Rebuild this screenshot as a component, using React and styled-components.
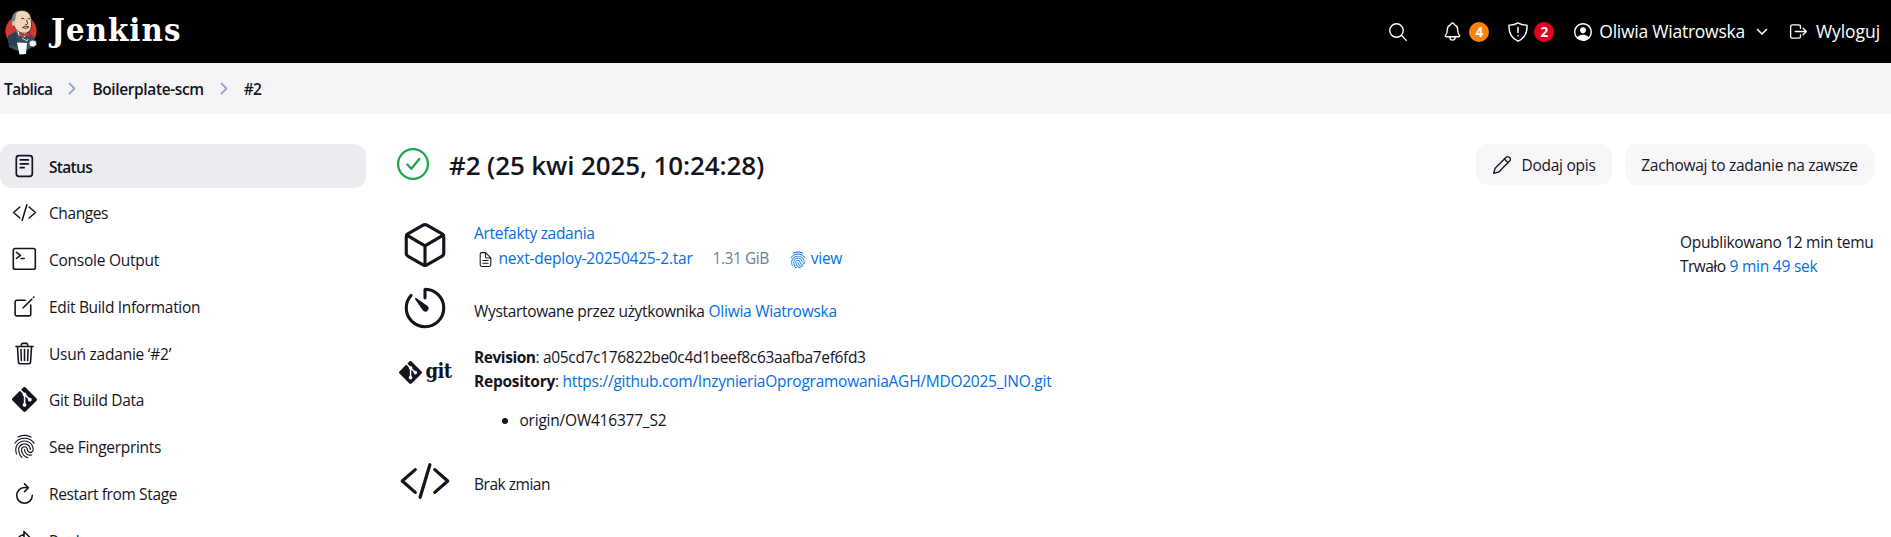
import React from "react";
import styled, { createGlobalStyle } from "styled-components";
import {
  IoSearchOutline,
  IoNotificationsOutline,
  IoPersonCircleOutline,
  IoLogOutOutline,
  IoCodeSlashOutline,
  IoCreateOutline,
  IoTrashOutline,
  IoFingerPrintOutline,
  IoRefreshOutline,
  IoCubeOutline,
  IoTimerOutline,
  IoDocumentTextOutline,
} from "react-icons/io5";
import { SiGit } from "react-icons/si";

const GlobalStyle = createGlobalStyle`
  * { box-sizing: border-box; }
  html, body { margin: 0; height: 100%; overflow: hidden; background: #fff; }
  body {
    font-family: "Open Sans", "Noto Sans", sans-serif;
    font-size: 15.5px;
    line-height: 24px;
    color: #14141f;
  }
  svg { display: block; flex-shrink: 0; }
`;

const Page = styled.div`
  height: 537px;
  overflow: hidden;
  display: flex;
  flex-direction: column;
`;

const Header = styled.header`
  flex: none;
  height: 63px;
  padding: 0 11px 0 5px;
  display: flex;
  align-items: center;
  justify-content: space-between;
  background: #000;
  color: #fff;
`;

const Brand = styled.a`
  display: flex;
  align-items: center;
  gap: 14px;
`;

const BrandName = styled.span`
  font-family: "DejaVu Serif Condensed", "DejaVu Serif", serif;
  font-stretch: condensed;
  font-weight: 700;
  font-size: 32.5px;
  line-height: 40px;
  letter-spacing: 1.1px;
  padding-bottom: 3px;
`;

const HeaderTools = styled.nav`
  display: flex;
  align-items: center;
`;

const Label = styled.span`
  letter-spacing: ${(p) => p.$track || 0}px;
  white-space: nowrap;
`;

const Tool = styled.a`
  display: flex;
  align-items: center;
  gap: ${(p) => p.$gap || 6}px;
  margin-left: ${(p) => p.$before || 0}px;
  font-size: 17.5px;
  white-space: nowrap;
  ${Label} { padding-bottom: 1px; }
`;

const Count = styled.span`
  width: 20px;
  height: 20px;
  border-radius: 50%;
  background: ${(p) => p.$color};
  font-size: 13.5px;
  font-weight: 700;
  line-height: 20px;
  text-align: center;
`;

const Breadcrumbs = styled.nav`
  flex: none;
  height: 51px;
  padding-left: 4px;
  display: flex;
  align-items: center;
  background: #f5f5f8;
  font-weight: 600;
`;

const Separator = styled.span`
  width: 40px;
  display: flex;
  justify-content: center;
  color: #94a5c5;
`;

const Body = styled.div`
  flex: 1;
  min-height: 0;
  display: flex;
  padding: 30px 17px 0 0;
`;

const Sidebar = styled.aside`
  flex: none;
  width: 366px;
  margin-right: 30px;
  display: flex;
  flex-direction: column;
  gap: 2.75px;
`;

const Task = styled.a`
  flex: none;
  height: 44px;
  padding-left: 12px;
  display: flex;
  align-items: center;
  gap: 12px;
  border-radius: 12px;
  background: ${(p) => (p.$active ? "#ecedf3" : "transparent")};
  font-weight: ${(p) => (p.$active ? 600 : 400)};
  ${Label} { padding-top: 1px; }
`;

const TaskIcon = styled.span`
  width: 25px;
  display: flex;
  justify-content: center;
`;

const Main = styled.main`
  flex: 1;
  min-width: 0;
`;

const TitleBar = styled.div`
  height: 41px;
  margin-bottom: 30px;
  display: flex;
  align-items: center;
`;

const Title = styled.h1`
  margin: 0 auto 0 20px;
  font-size: 26px;
  font-weight: 600;
  line-height: 40px;
  letter-spacing: -0.12px;
`;

const Button = styled.button`
  height: 41px;
  width: ${(p) => p.$width}px;
  margin-left: 13px;
  padding: 0;
  display: flex;
  align-items: center;
  justify-content: center;
  gap: 9px;
  border: 0;
  border-radius: 12px;
  background: #f7f7fa;
  color: inherit;
  font: inherit;
  ${Label} { padding-top: 1px; }
`;

const Content = styled.div`
  display: flex;
  justify-content: space-between;
`;

const Row = styled.section`
  display: flex;
  align-items: ${(p) => p.$align || "center"};
  height: ${(p) => p.$height}px;
`;

const RowIcon = styled.div`
  width: 58px;
  height: 62px;
  margin-right: 20px;
  display: flex;
  align-items: center;
  justify-content: center;
`;

const RowText = styled.div`
  padding-top: ${(p) => p.$top || 0}px;
`;

const Link = styled.a`
  color: #006fe6;
  letter-spacing: ${(p) => p.$track || 0}px;
  white-space: nowrap;
`;

const Artifact = styled.div`
  display: flex;
  align-items: center;
  height: 26px;
  padding-left: 3px;
  svg { margin-top: 3px; }
`;

const FileLink = styled(Link)`
  margin-left: 4.5px;
`;

const FileSize = styled.span`
  margin: 0 20px 0 20px;
  color: #6b7d9c;
  letter-spacing: -0.45px;
`;

const ViewLink = styled(Link)`
  display: flex;
  align-items: center;
  gap: 4px;
`;

const GitLogo = styled.div`
  display: flex;
  align-items: center;
  gap: 4px;
`;

const GitWord = styled.span`
  font-family: "DejaVu Serif Condensed", "DejaVu Serif", serif;
  font-stretch: condensed;
  font-weight: 700;
  font-size: 20px;
  letter-spacing: -0.6px;
  padding-bottom: 3px;
`;

const Branches = styled.ul`
  margin: 15px 0 0;
  padding-left: 45.5px;
`;

const Timing = styled.div`
  width: 194px;
  padding-top: 15px;
`;

const Butler = () => (
  <svg width="32" height="46" viewBox="0 0 32 46">
    <circle cx="16" cy="22" r="15.6" fill="#d33833" />
    <path d="M3 27l8-5 12 1 6 5 1 9-6 3-5 3-9-2-6-3z" fill="#335061" />
    <path d="M3 27l8-4 2 15-7-1-3-4z" fill="#264252" />
    <path d="M11 20l3 7 6 1 3-6z" fill="#fff" />
    <path d="M7.500 11C7.500 5 11.500 1.500 17 1.500S26 5 26.300 11c0 3 .8 5-.5 8.500-1 3-3.500 4.800-6.500 4.800-5 0-9-3.300-10.500-8.300z" fill="#f0d6b7" stroke="#332a24" strokeWidth=".8" />
    <path d="M7.500 15C5.500 9 8 3.500 13 2c-2 2.500-2.500 5-2.500 7.500L9 15z" fill="#7b7d80" />
    <ellipse cx="8.600" cy="14.500" rx="1.700" ry="2.400" fill="#e5bd97" />
    <path d="M16 10q2-1.600 3.500 0M22.500 10q1.500-1.300 2.500 0M21.500 11q2 4 .5 4.500h-1.500M17.500 18.500q2.500-2.500 6.500-.6-2.500 2.800-6.500.6" fill="none" stroke="#493629" strokeWidth="1" />
    <path d="M14.500 23.500l5 2 5-2.500.5 5.500-5-2-5 2.500z" fill="#d33833" stroke="#68211e" strokeWidth=".5" />
    <path d="M17 29l5 3 1-2" fill="none" stroke="#dce3e6" strokeWidth="1" />
    <path d="M12 33.500l10 .5L21 45l-6.500.5z" fill="#fff" />
    <path d="M24 33l3-2 4 1 .5 4-3 2-4-1z" fill="#f4eee6" stroke="#444" strokeWidth=".7" />
  </svg>
);

const ShieldIcon = () => (
  <svg width="20" height="20" viewBox="0 0 20 20" fill="none" stroke="currentColor" strokeWidth="1.400" strokeLinecap="round" strokeLinejoin="round">
    <path d="M10 .9C7.600 2.500 4.500 3.200 1 3.100c-.5 7.500 1.500 12.500 9 16.100 7.500-3.600 9.500-8.600 9-16.100-3.500.1-6.600-.6-9-2.200z" />
    <path d="M10 5.500v5M10 13.400v.3" strokeWidth="1.500" />
  </svg>
);

const ChevronDown = () => (
  <svg width="12" height="8" viewBox="0 0 12 8" fill="none" stroke="currentColor" strokeWidth="1.600" strokeLinecap="round" strokeLinejoin="round">
    <path d="M1.500 1.500L6 6l4.500-4.500" />
  </svg>
);

const ChevronRight = () => (
  <svg width="8" height="13" viewBox="0 0 8 13" fill="none" stroke="currentColor" strokeWidth="1.800" strokeLinecap="round" strokeLinejoin="round">
    <path d="M1.500 1.500l5 5-5 5" />
  </svg>
);

const PencilIcon = () => (
  <svg width="20" height="20" viewBox="0 0 20 20" fill="none" stroke="currentColor" strokeWidth="1.350" strokeLinecap="round" strokeLinejoin="round">
    <path d="M1.700 18.300L3.100 13.200 13.900 2.400Q15.700.8 17.600 2.400 19.200 4.300 17.600 6.100L6.800 16.900z" />
    <path d="M12.300 4L16 7.700" />
  </svg>
);

const StatusIcon = () => (
  <svg width="25" height="25" viewBox="0 0 25 25" fill="none" stroke="currentColor" strokeWidth="1.700" strokeLinecap="round">
    <rect x="4.300" y="1.600" width="16" height="20.800" rx="2.600" />
    <path d="M8.300 5.900h8M8.300 9.800h8M8.300 13.700h3.800" />
  </svg>
);

const ConsoleIcon = () => (
  <svg width="25" height="25" viewBox="0 0 25 25" fill="none" stroke="currentColor" strokeWidth="1.600" strokeLinecap="round" strokeLinejoin="round">
    <rect x="1.300" y="1.500" width="22" height="20.800" rx="1.800" />
    <path d="M4.500 5.300l4 3-4 3M9 11.500h3.200" />
  </svg>
);

const ReplayIcon = () => (
  <svg width="25" height="25" viewBox="0 0 25 25" fill="none" stroke="currentColor" strokeWidth="1.600" strokeLinecap="round" strokeLinejoin="round">
    <path d="M12 3.500l5.500 5.500-5.500 5.500V3.500zM12 6.500C6 7.500 3.500 13 4.500 20" />
  </svg>
);

const SuccessIcon = () => (
  <svg width="33" height="33" viewBox="0 0 33 33" fill="none" stroke="#1ea64b" strokeWidth="2.300" strokeLinecap="round" strokeLinejoin="round">
    <circle cx="17" cy="16" r="14.900" />
    <path d="M11.300 16.500l4 4.300 8-9.800" />
  </svg>
);

const tasks = [
  { label: "Status", icon: <StatusIcon />, track: -0.69, active: true },
  { label: "Changes", icon: <IoCodeSlashOutline size={25} />, track: -0.41 },
  { label: "Console Output", icon: <ConsoleIcon />, track: -0.25 },
  { label: "Edit Build Information", icon: <IoCreateOutline size={25} />, track: -0.33 },
  { label: "Usuń zadanie ‘#2’", icon: <IoTrashOutline size={25} />, track: -0.23 },
  { label: "Git Build Data", icon: <SiGit size={25} />, track: -0.33 },
  { label: "See Fingerprints", icon: <IoFingerPrintOutline size={25} />, track: -0.31 },
  { label: "Restart from Stage", icon: <IoRefreshOutline size={25} />, track: -0.37 },
  { label: "Replay", icon: <ReplayIcon />, track: -0.35 },
];

export default function App() {
  return (
    <Page>
      <GlobalStyle />
      <Header>
        <Brand>
          <Butler />
          <BrandName>Jenkins</BrandName>
        </Brand>
        <HeaderTools>
          <Tool><IoSearchOutline size={22} /></Tool>
          <Tool $before={33}>
            <IoNotificationsOutline size={21} />
            <Count $color="#ff820d">4</Count>
          </Tool>
          <Tool $before={19}>
            <ShieldIcon />
            <Count $color="#e6001f">2</Count>
          </Tool>
          <Tool $before={18} $gap={5}>
            <IoPersonCircleOutline size={22} />
            <Label $track={-0.24}>Oliwia Wiatrowska</Label>
          </Tool>
          <Tool $before={11}><ChevronDown /></Tool>
          <Tool $before={20} $gap={7}>
            <IoLogOutOutline size={21} />
            <Label $track={-0.07}>Wyloguj</Label>
          </Tool>
        </HeaderTools>
      </Header>

      <Breadcrumbs>
        <Label $track={-0.62}>Tablica</Label>
        <Separator><ChevronRight /></Separator>
        <Label $track={-0.38}>Boilerplate-scm</Label>
        <Separator><ChevronRight /></Separator>
        <Label $track={-0.7}>#2</Label>
      </Breadcrumbs>

      <Body>
        <Sidebar>
          {tasks.map((t) => (
            <Task key={t.label} $active={t.active}>
              <TaskIcon>{t.icon}</TaskIcon>
              <Label $track={t.track}>{t.label}</Label>
            </Task>
          ))}
        </Sidebar>

        <Main>
          <TitleBar>
            <SuccessIcon />
            <Title>#2 (25 kwi 2025, 10:24:28)</Title>
            <Button $width={136}>
              <PencilIcon />
              <Label $track={-0.27}>Dodaj opis</Label>
            </Button>
            <Button $width={249}>
              <Label $track={-0.28}>Zachowaj to zadanie na zawsze</Label>
            </Button>
          </TitleBar>

          <Content>
            <div>
              <Row $height={60}>
                <RowIcon><IoCubeOutline size={50} /></RowIcon>
                <RowText $top={2}>
                  <Link $track={-0.3}>Artefakty zadania</Link>
                  <Artifact>
                    <IoDocumentTextOutline size={17} />
                    <FileLink $track={-0.22}>next-deploy-20250425-2.tar</FileLink>
                    <FileSize>1.31 GiB</FileSize>
                    <ViewLink $track={-0.3}>
                      <IoFingerPrintOutline size={18} />
                      view
                    </ViewLink>
                  </Artifact>
                </RowText>
              </Row>
              <Row $height={66}>
                <RowIcon><IoTimerOutline size={50} /></RowIcon>
                <RowText $top={6}>
                  <Label $track={-0.33}>Wystartowane przez użytkownika</Label>{" "}
                  <Link $track={-0.26}>Oliwia Wiatrowska</Link>
                </RowText>
              </Row>
              <Row $height={107} $align="flex-start">
                <RowIcon>
                  <GitLogo>
                    <SiGit size={23} />
                    <GitWord>git</GitWord>
                  </GitLogo>
                </RowIcon>
                <RowText $top={4}>
                  <div>
                    <b><Label $track={-0.45}>Revision</Label></b>
                    <Label $track={-0.34}>: a05cd7c176822be0c4d1beef8c63aafba7ef6fd3</Label>
                  </div>
                  <div>
                    <b><Label $track={-0.24}>Repository</Label></b>
                    <Label $track={-0.3}>: </Label>
                    <Link $track={-0.25}>
                      https://github.com/InzynieriaOprogramowaniaAGH/MDO2025_INO.git
                    </Link>
                  </div>
                  <Branches>
                    <li><Label $track={-0.22}>origin/OW416377_S2</Label></li>
                  </Branches>
                </RowText>
              </Row>
              <Row $height={66}>
                <RowIcon><IoCodeSlashOutline size={52} /></RowIcon>
                <RowText $top={6}><Label $track={-0.48}>Brak zmian</Label></RowText>
              </Row>
            </div>
            <Timing>
              <div><Label $track={-0.31}>Opublikowano 12 min temu</Label></div>
              <div>
                <Label $track={-0.55}>Trwało</Label>{" "}
                <Link $track={-0.22}>9 min 49 sek</Link>
              </div>
            </Timing>
          </Content>
        </Main>
      </Body>
    </Page>
  );
}
